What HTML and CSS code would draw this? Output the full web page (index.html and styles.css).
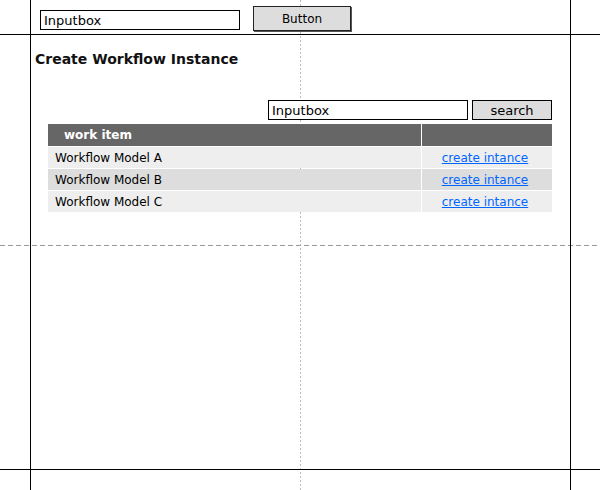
FILE: index.html
```html
<!DOCTYPE html>
<html>
<head>
<meta charset="utf-8">
<title>Create Workflow Instance</title>
<link rel="stylesheet" href="styles.css">
</head>
<body>
<div class="page">
  <div class="guide guide-vdash"></div>
  <div class="guide guide-hdash"></div>
  <div class="guide guide-left"></div>
  <div class="guide guide-right"></div>
  <div class="guide guide-bottom"></div>

  <header class="topbar">
    <input class="textbox textbox-top" type="text" value="Inputbox">
    <button class="btn btn-top" type="button">Button</button>
  </header>

  <main class="content">
    <h1 class="title">Create Workflow Instance</h1>
    <div class="search-row">
      <input class="textbox textbox-search" type="text" value="Inputbox">
      <button class="btn btn-search" type="button">search</button>
    </div>
    <table class="grid">
      <thead>
        <tr>
          <th class="col-item">work item</th>
          <th class="col-action"></th>
        </tr>
      </thead>
      <tbody>
        <tr class="row-light">
          <td class="col-item">Workflow Model A</td>
          <td class="col-action"><a href="#" class="link">create intance</a></td>
        </tr>
        <tr class="row-dark">
          <td class="col-item">Workflow Model B</td>
          <td class="col-action"><a href="#" class="link">create intance</a></td>
        </tr>
        <tr class="row-light">
          <td class="col-item">Workflow Model C</td>
          <td class="col-action"><a href="#" class="link">create intance</a></td>
        </tr>
      </tbody>
    </table>
  </main>
</div>
</body>
</html>
```
FILE: styles.css
```css
html, body {
  margin: 0;
  padding: 0;
  background: #fff;
}

body {
  font-family: "DejaVu Sans", Verdana, sans-serif;
  color: #000;
}

.page {
  position: relative;
  width: 600px;
  height: 490px;
  overflow: hidden;
}

/* canvas guide lines */
.guide {
  position: absolute;
}

.guide-vdash {
  left: 300px;
  top: 0;
  width: 1px;
  height: 490px;
  background: repeating-linear-gradient(to bottom, #bdbdbd 0 2px, transparent 2px 4px);
  z-index: 0;
}

.guide-hdash {
  left: 0;
  top: 245px;
  width: 600px;
  height: 1px;
  background: repeating-linear-gradient(to right, #999 0 5px, transparent 5px 8px);
  z-index: 0;
}

.guide-left,
.guide-right {
  top: 0;
  width: 1px;
  height: 490px;
  background: #000;
  z-index: 2;
}

.guide-left { left: 30px; }
.guide-right { left: 570px; }

.guide-bottom {
  left: 0;
  top: 469px;
  width: 600px;
  height: 1px;
  background: #000;
  z-index: 2;
}

/* top bar */
.topbar {
  position: relative;
  z-index: 1;
  display: flex;
  align-items: flex-start;
  gap: 13px;
  height: 34px;
  padding-left: 40px;
  border-bottom: 1px solid #000;
}

.textbox {
  box-sizing: border-box;
  width: 200px;
  height: 20px;
  margin: 0;
  padding: 0 3px;
  border: 1px solid #000;
  border-radius: 0;
  background: #fff;
  font-family: "DejaVu Sans", Verdana, sans-serif;
  font-size: 13px;
  color: #000;
  outline: none;
}

.textbox-top {
  margin-top: 10px;
}

.btn {
  box-sizing: border-box;
  margin: 0;
  padding: 0;
  border: 1px solid #222;
  border-radius: 0;
  background: #ddd;
  font-family: "DejaVu Sans", Verdana, sans-serif;
  color: #000;
  cursor: pointer;
}

.btn-top {
  width: 98px;
  height: 25px;
  margin-top: 6px;
  padding-top: 1px;
  font-size: 12px;
  box-shadow: 1px 1px 0 #555;
}

/* content */
.content {
  position: relative;
  z-index: 1;
}

.title {
  margin: 16px 0 0 0;
  padding-left: 35px;
  font-size: 14px;
  line-height: 16px;
  font-weight: bold;
  color: #111;
}

.search-row {
  display: flex;
  justify-content: flex-end;
  gap: 4px;
  width: 504px;
  margin: 33px 0 0 48px;
}

.btn-search {
  width: 80px;
  height: 20px;
  font-size: 13px;
  border-color: #000;
}

.grid {
  border-collapse: separate;
  border-spacing: 1px;
  margin: 3px 0 0 47px;
  font-size: 12px;
}

.grid th,
.grid td {
  padding: 0;
  white-space: nowrap;
}

.grid th {
  height: 22px;
  background: #666;
  color: #fff;
  font-weight: bold;
  text-align: left;
}

.grid th.col-item {
  padding-left: 16px;
  width: 357px;
}

.grid td {
  height: 21px;
}

.grid td.col-item {
  padding-left: 7px;
  width: 366px;
  text-align: left;
}

.grid .col-action {
  width: 126px;
  padding-right: 4px;
  text-align: center;
}

.row-light td { background: #eee; }
.row-dark td { background: #ddd; }

.link {
  color: #0066ff;
  text-decoration: underline;
}
```
